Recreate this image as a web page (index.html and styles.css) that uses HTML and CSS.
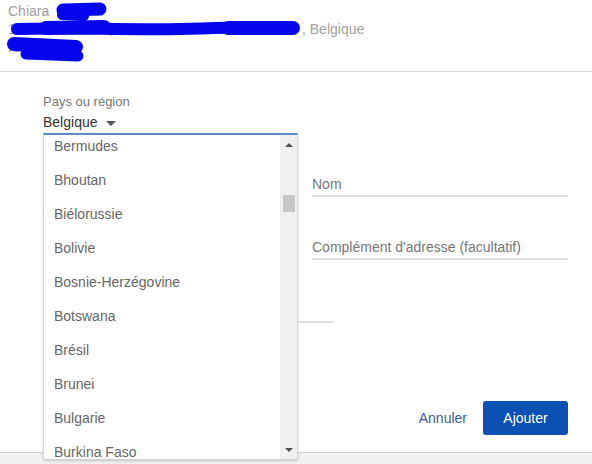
FILE: index.html
```html
<!DOCTYPE html>
<html lang="fr">
<head>
<meta charset="utf-8">
<title>Adresse</title>
<link rel="stylesheet" href="styles.css">
</head>
<body>
<div class="page">
  <header class="header">
    <div class="hline">Chiara <span class="hidden-name">Xxxxxx</span></div>
    <div class="hline"><span class="hidden-street">1 rue Xxxxxxxxx, 1000 Xxxxxxxxxxxxxxxxxxx</span>, Belgique</div>
    <div class="hline">Xxxxxxxxx</div>
    <svg class="redact" width="320" height="64" viewBox="0 0 320 64" aria-hidden="true">
      <g stroke="#0505ee" stroke-linecap="round" stroke-linejoin="round" fill="none">
        <path d="M63 10 L100 9" stroke-width="13"/>
        <path d="M62 15 L84 16" stroke-width="10"/>
        <path d="M17 29 C 60 27, 120 30, 180 29 S 260 26, 293 28" stroke-width="12"/>
        <path d="M46 28 L104 27" stroke-width="14"/>
        <path d="M228 28 L293 28" stroke-width="14"/>
        <path d="M14 44 L76 47" stroke-width="14"/>
        <path d="M26 54 L78 56" stroke-width="11"/>
      </g>
    </svg>
  </header>

  <main class="form">
    <div class="grid">
      <div class="field country">
        <div class="label">Pays ou région</div>
        <div class="value">Belgique <span class="caret"></span></div>
        <div class="dropdown">
          <ul class="options">
            <li>Bermudes</li>
            <li>Bhoutan</li>
            <li>Biélorussie</li>
            <li>Bolivie</li>
            <li>Bosnie-Herzégovine</li>
            <li>Botswana</li>
            <li>Brésil</li>
            <li>Brunei</li>
            <li>Bulgarie</li>
            <li>Burkina Faso</li>
          </ul>
          <div class="scrollbar">
            <span class="arrow up"></span>
            <span class="thumb"></span>
            <span class="arrow down"></span>
          </div>
        </div>
      </div>
      <div></div>

      <div class="field input"></div>
      <div class="field input">Nom</div>

      <div class="field input"></div>
      <div class="field input">Complément d'adresse (facultatif)</div>

      <div class="field input wide"></div>
      <div></div>
    </div>

    <div class="actions">
      <button class="link" type="button">Annuler</button>
      <button class="primary" type="button">Ajouter</button>
    </div>
  </main>

  <footer class="footer"></footer>
</div>
</body>
</html>
```

FILE: styles.css
```css
* { box-sizing: border-box; }

html, body {
  margin: 0;
  padding: 0;
  background: #ffffff;
}

body {
  font-family: "Liberation Sans", Arial, sans-serif;
  font-size: 14px;
  color: #555;
  overflow: hidden;
}

.page {
  width: 592px;
  height: 464px;
  display: flex;
  flex-direction: column;
  overflow: hidden;
}

.header {
  position: relative;
  height: 72px;
  flex: none;
  padding: 2px 8px 0;
  border-bottom: 1px solid #d4d4d4;
  color: #a0a0a0;
  font-size: 14px;
}

.hline {
  line-height: 18px;
  height: 18px;
  white-space: nowrap;
}

.hidden-name {
  padding-left: 6px;
}

.hidden-street {
  display: inline-block;
  width: 294px;
  overflow: hidden;
  vertical-align: top;
}

.redact {
  position: absolute;
  left: 0;
  top: 0;
}

.form {
  padding: 0 24px 0 43px;
}

.grid {
  display: grid;
  grid-template-columns: 255px 256px;
  column-gap: 14px;
  row-gap: 40px;
}

.field {
  position: relative;
}

.country {
  padding-top: 22px;
  margin-bottom: 1px;
}

.label {
  font-size: 13px;
  line-height: 16px;
  color: #777;
}

.value {
  margin-top: 1px;
  line-height: 22px;
  height: 22px;
  color: #333;
  display: flex;
  align-items: center;
}

.caret {
  display: inline-block;
  width: 0;
  height: 0;
  margin-left: 8px;
  margin-top: 2px;
  border-left: 5px solid transparent;
  border-right: 5px solid transparent;
  border-top: 5px solid #555;
}

.input {
  min-height: 23px;
  line-height: 20px;
  padding-bottom: 1px;
  border-bottom: 2px solid #e0e0e0;
  color: #777;
}

.wide {
  width: 290px;
}

.dropdown {
  position: absolute;
  left: 0;
  top: 100%;
  width: 255px;
  height: 327px;
  z-index: 5;
  background: #fff;
  border-top: 2px solid #5b8bc0;
  border-left: 1px solid #d6d6d6;
  border-right: 1px solid #d6d6d6;
  border-bottom: 1px solid #d0d0d0;
  border-radius: 0 0 3px 3px;
  box-shadow: 0 1px 3px rgba(0, 0, 0, 0.18);
  display: flex;
  overflow: hidden;
}

.options {
  list-style: none;
  margin: -6px 0 0;
  padding: 0;
  flex: 1;
}

.options li {
  height: 34px;
  line-height: 34px;
  padding-left: 10px;
  color: #666;
  white-space: nowrap;
}

.scrollbar {
  position: relative;
  width: 17px;
  background: #f0f0f0;
  border-left: 1px solid #ececec;
}

.arrow {
  position: absolute;
  left: 4px;
  width: 0;
  height: 0;
  border-left: 4px solid transparent;
  border-right: 4px solid transparent;
}

.arrow.up {
  top: 8px;
  border-bottom: 4px solid #505050;
}

.arrow.down {
  bottom: 7px;
  border-top: 4px solid #505050;
}

.thumb {
  position: absolute;
  left: 2px;
  top: 60px;
  width: 12px;
  height: 17px;
  background: #c6c6c6;
}

.actions {
  margin-top: 78px;
  display: flex;
  justify-content: flex-end;
  align-items: center;
  gap: 16px;
}

button {
  font-family: "Liberation Sans", Arial, sans-serif;
  font-size: 14px;
  border: none;
  cursor: pointer;
}

.link {
  background: none;
  color: #3d5a98;
  padding: 0;
  line-height: 34px;
}

.primary {
  background: #0b50b3;
  color: #fff;
  height: 34px;
  width: 85px;
  border-radius: 3px;
  padding: 0;
}

.footer {
  margin-top: 17px;
  flex: 1;
  background: #f0f0f0;
  border-top: 1px solid #d4d4d4;
}
```
